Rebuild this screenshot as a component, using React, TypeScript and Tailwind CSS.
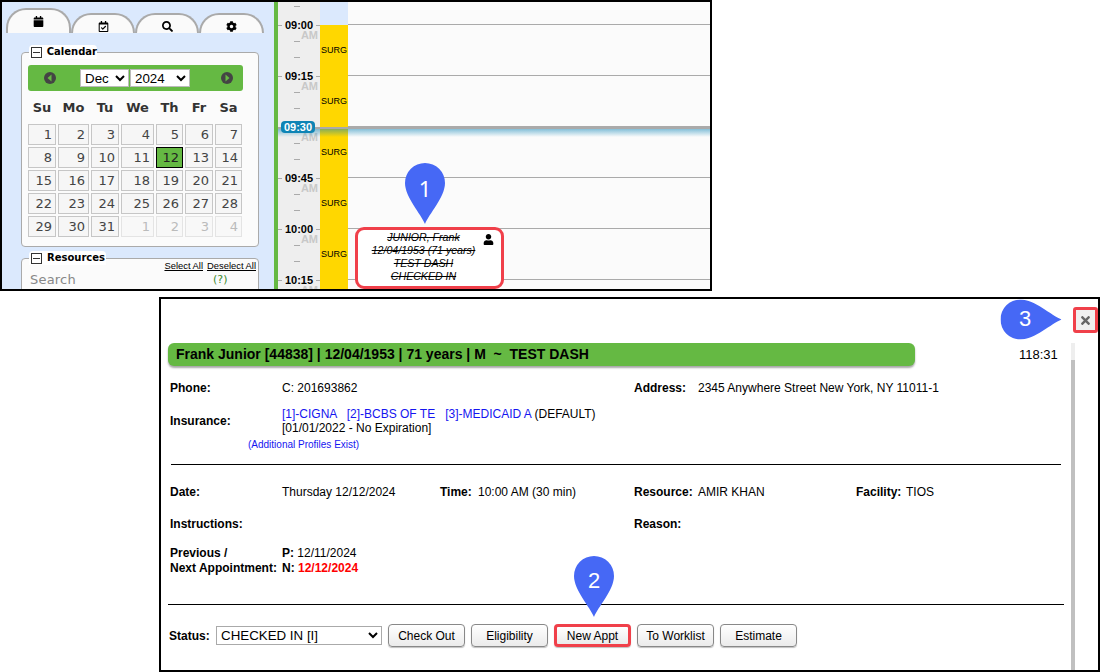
import { FaCalendar, FaRegCalendarCheck, FaSearch, FaCog, FaUser, FaTimes } from 'react-icons/fa'

const weeks = [
  [1, 2, 3, 4, 5, 6, 7],
  [8, 9, 10, 11, 12, 13, 14],
  [15, 16, 17, 18, 19, 20, 21],
  [22, 23, 24, 25, 26, 27, 28],
  [29, 30, 31, 1, 2, 3, 4],
]
const dayNames = ['Su', 'Mo', 'Tu', 'We', 'Th', 'Fr', 'Sa']
const times = ['09:00', '09:15', '09:30', '09:45', '10:00', '10:15']

const detailRow = 'grid grid-cols-[112px_158px_38px_156px_64px_158px_50px_1fr] items-center'

function Pin({ n, className, side }: { n: number; className: string; side?: boolean }) {
  return (
    <div className={`absolute z-20 flex ${side ? 'w-[62px] h-[40px]' : 'w-[40px] h-[61px]'} ${className}`}>
      <svg viewBox="0 0 40 61" className={side ? 'absolute left-[11px] top-[-10px] w-[40px] h-[61px] -rotate-90' : 'absolute inset-0 w-[40px] h-[61px]'}>
        <path d="M20 61 C16 51 0 34 0 20 A20 20 0 0 1 40 20 C40 34 24 51 20 61 Z" fill="#4668f5" />
      </svg>
      <span className={`relative ${side ? 'w-[50px] h-[40px]' : 'w-full h-[50px]'} flex items-center justify-center text-white text-[22px] leading-none`}>{n}</span>
    </div>
  )
}

function Legend({ title, width }: { title: string; width: string }) {
  return (
    <div className={`absolute left-[7px] top-[-8px] h-[14px] ${width} bg-white rounded-t-sm flex items-center gap-[5px] pl-[2px]`}>
      <span className="w-[11px] h-[11px] border border-[#333] bg-white flex items-center justify-center">
        <span className="w-[7px] h-px bg-[#333]" />
      </span>
      <span className="text-[10px] font-bold text-black font-['DejaVu_Sans',sans-serif] leading-none">{title}</span>
    </div>
  )
}

function MonthArrow({ dir }: { dir: 'l' | 'r' }) {
  return (
    <svg viewBox="0 0 12 12" className="w-[12px] h-[12px]">
      <circle cx="6" cy="6" r="6" fill="#444" />
      <polygon points={dir === 'l' ? '7.5,2.5 7.5,9.5 3.5,6' : '4.5,2.5 4.5,9.5 8.5,6'} fill="#65b943" />
    </svg>
  )
}

function Sidebar() {
  return (
    <div className="w-[272px] h-full bg-[#dbe9fd] shrink-0 overflow-hidden font-['DejaVu_Sans',sans-serif]">
      <div className="flex items-end h-[31px] pl-[4px]">
        <div className="w-[65px] h-[25px] bg-[#fafafa] border-2 border-b-0 border-[#aaa] rounded-t-[20px] flex justify-center pt-[6px]">
          <FaCalendar className="text-[11px] text-black" />
        </div>
        <div className="w-[64px] h-[20px] bg-[#fafafa] border-2 border-b-0 border-[#aaa] rounded-t-[20px] flex justify-center pt-[6px]">
          <FaRegCalendarCheck className="text-[11px] text-black" />
        </div>
        <div className="w-[64px] h-[20px] bg-[#fafafa] border-2 border-b-0 border-[#aaa] rounded-t-[20px] flex justify-center pt-[6px]">
          <FaSearch className="text-[11px] text-black" />
        </div>
        <div className="w-[65px] h-[20px] bg-[#fafafa] border-2 border-b-0 border-[#aaa] rounded-t-[20px] flex justify-center pt-[6px]">
          <FaCog className="text-[11px] text-black" />
        </div>
      </div>

      <div className="relative ml-[19px] mt-[19px] w-[238px] h-[195px] bg-[#fbfbfb] border border-[#aaa] rounded-[4px] px-[6px] pt-[12px]">
        <Legend title="Calendar" width="w-[68px]" />
        <div className="h-[26px] w-[215px] bg-[#65b943] rounded-[3px] flex items-center pl-[16px] pr-[10px]">
          <MonthArrow dir="l" />
          <div className="flex gap-px ml-[24px] font-['Liberation_Sans',sans-serif]">
            <select defaultValue="Dec" className="w-[49px] h-[18px] bg-white border border-[#bbb] text-[13.33px] text-black appearance-auto">
              <option>Dec</option>
            </select>
            <select defaultValue="2024" className="w-[60px] h-[18px] bg-white border border-[#bbb] text-[13.33px] text-black appearance-auto">
              <option>2024</option>
            </select>
          </div>
          <div className="ml-auto flex">
            <MonthArrow dir="r" />
          </div>
        </div>
        <div className="grid grid-cols-[28px_31px_28px_33px_27px_28px_27px] gap-x-[2px] gap-y-[2px]">
          {dayNames.map((d) => (
            <div key={d} className="h-[31px] pt-[2px] flex items-center justify-center text-[13px] font-bold text-[#333]">
              {d}
            </div>
          ))}
          {weeks.map((week, w) =>
            week.map((d, i) => {
              const faded = w === 4 && i > 2
              const today = d === 12
              return (
                <div
                  key={`${w}-${i}`}
                  className={`h-[21px] border flex items-center justify-end pr-[3px] text-[13px] ${
                    today
                      ? 'bg-[#65b943] border-black text-[#222]'
                      : faded
                        ? 'bg-[#f8f8f8] border-[#e4e4e4] text-[#bbb]'
                        : 'bg-[#f6f6f6] border-[#c6c6c6] text-[#444]'
                  }`}
                >
                  {d}
                </div>
              )
            })
          )}
        </div>
      </div>

      <div className="relative ml-[19px] mt-[11px] w-[238px] h-[60px] bg-[#fbfbfb] border border-[#aaa] rounded-[4px]">
        <Legend title="Resources" width="w-[77px]" />
        <div className="flex justify-end gap-[4px] pr-[2px] pt-[1px] text-[9.4px] text-black underline font-['Liberation_Sans',sans-serif] h-[12px] leading-[12px]">
          <span>Select All</span>
          <span>Deselect All</span>
        </div>
        <div className="flex items-center pl-[8px] mt-[1px] h-[16px]">
          <span className="w-[183px] text-[13px] text-[#888] tracking-[0.2px]">Search</span>
          <span className="text-[11px] text-[#3d8b2f]">(?)</span>
        </div>
        <div className="ml-[7px] mt-[1px] w-[180px] h-px bg-[#aaa]" />
      </div>
    </div>
  )
}

function Dash() {
  return <div className="w-[6px] h-px bg-[#aaa]" />
}

function TimeColumn() {
  return (
    <div className="w-[42px] shrink-0 bg-[#eeeeee] font-['Liberation_Sans',sans-serif]">
      <div className="h-[17px] pt-[4px] pl-[16px]">
        <Dash />
      </div>
      {times.map((t) => (
        <div key={t} className="h-[51px]">
          <div className="h-[12px] flex items-center justify-between">
            <span className="w-[4px] h-px bg-[#aaa]" />
            <span className="text-[11px] font-bold text-black leading-none">{t === '09:30' ? '' : t}</span>
            <span className="w-[4px] h-px bg-[#aaa]" />
          </div>
          <div className="h-[9px] pr-[2px] text-right text-[11px] font-bold text-[#c8c8c8] leading-[9px]">AM</div>
          <div className="pl-[16px] mt-[1px]">
            <Dash />
          </div>
          <div className="pl-[16px] mt-[15px]">
            <Dash />
          </div>
        </div>
      ))}
    </div>
  )
}

function Schedule() {
  return (
    <div className="relative flex-1 h-full flex overflow-hidden border-l-4 border-[#65b943]">
      <TimeColumn />
      <div className="w-[28px] shrink-0 bg-[#dbe9fd] font-['Liberation_Sans',sans-serif]">
        <div className="h-[23px]" />
        {times.map((t) => (
          <div key={t} className="h-[51px] bg-[#ffd700] flex items-center justify-center text-[9px] text-black">
            {t === '10:15' ? '' : 'SURG'}
          </div>
        ))}
      </div>
      <div className="relative flex-1 bg-[#fbfbfb] font-['Liberation_Sans',sans-serif]">
        <div className="h-[22px]" />
        {times.map((t) => (
          <div key={t} className="h-[51px] border-t border-[#aaa]" />
        ))}
        <div className="absolute left-[7px] top-[225px] w-[149px] h-[62px] bg-white border-[3px] border-[#f0404a] rounded-[9px] z-10 pt-[1px] pr-[12px] text-center text-[10.6px] leading-[13px] italic line-through text-black">
          <div>JUNIOR, Frank</div>
          <div>12/04/1953 (71 years)</div>
          <div>TEST DASH</div>
          <div>CHECKED IN</div>
          <FaUser className="absolute right-[7px] top-[4px] text-[11px] text-black" />
        </div>
      </div>
      {/* current time marker */}
      <div className="absolute left-0 right-0 top-[125px] h-[10px] pointer-events-none">
        <div className="h-[2px] bg-[#aaa]" />
        <div className="h-[8px] bg-linear-to-b from-[#0e84b5]/50 to-transparent" />
        <div className="absolute left-[3px] top-[-6px] w-[34px] h-[12px] bg-[#0e84b5] rounded-[4px] text-white text-[11px] font-bold leading-[12px] text-center font-['Liberation_Sans',sans-serif]">
          09:30
        </div>
      </div>
    </div>
  )
}

function ActionButton({ label, marked }: { label: string; marked?: boolean }) {
  return (
    <button
      className={`w-[77px] h-[23px] rounded-[4px] bg-linear-to-b from-white to-[#ebebeb] text-[12px] text-black shadow-[0_1px_1px_rgba(0,0,0,0.25)] ${
        marked ? 'border-[3px] border-[#f0404a]' : 'border border-[#888]'
      }`}
    >
      {label}
    </button>
  )
}

function Details() {
  return (
    <div className="relative ml-[159px] mt-[6px] w-[941px] h-[375px] border-2 border-black bg-white font-['Liberation_Sans',sans-serif] text-[12px] text-black overflow-hidden">
      <Pin n={3} side className="left-[839px] top-0" />
      <Pin n={2} className="left-[413px] top-[257px]" />

      <div className="flex justify-end h-[44px] pt-[8px]">
        <button className="w-[25px] h-[26px] border-[3px] border-[#f0404a] rounded-[3px] bg-[#f0f0f0] flex items-center justify-center">
          <FaTimes className="text-[13px] text-[#666]" />
        </button>
      </div>

      <div className="flex">
        <div className="w-[904px] pl-[7px]">
          <div className="flex items-center">
            <div className="w-[747px] h-[23px] bg-[#65b943] rounded-[6px] shadow-[0_2px_2px_rgba(0,0,0,0.35)] pl-[8px] flex items-center text-[14px] font-bold whitespace-pre">
              Frank Junior [44838] | 12/04/1953 | 71 years | M  ~  TEST DASH
            </div>
            <span className="ml-[104px] w-[39px] text-[13px]">118:31</span>
          </div>

          <div className="pl-[2px] w-[897px]">
            <div className={`${detailRow} mt-[13px] h-[14px]`}>
              <b>Phone:</b>
              <span className="col-span-3">C: 201693862</span>
              <b>Address:</b>
              <span className="col-span-3">2345 Anywhere Street New York, NY 11011-1</span>
            </div>
            <div className={`${detailRow} mt-[14px]`}>
              <b>Insurance:</b>
              <div className="col-span-6 leading-[14px]">
                <div className="whitespace-pre">
                  <span className="text-[#1515f0]">[1]-CIGNA   [2]-BCBS OF TE   [3]-MEDICAID A</span> (DEFAULT)
                </div>
                <div>[01/01/2022 - No Expiration]</div>
              </div>
            </div>
            <div className="pl-[78px] mt-[4px] text-[10px] leading-[12px] text-[#1515f0]">(Additional Profiles Exist)</div>
            <div className="mt-[13px] ml-[1px] w-[890px] h-px bg-black" />

            <div className={`${detailRow} mt-[18px] h-[14px]`}>
              <b>Date:</b>
              <span>Thursday 12/12/2024</span>
              <b>Time:</b>
              <span>10:00 AM (30 min)</span>
              <b>Resource:</b>
              <span>AMIR KHAN</span>
              <b>Facility:</b>
              <span>TIOS</span>
            </div>
            <div className={`${detailRow} mt-[18px] h-[14px]`}>
              <b className="col-span-4">Instructions:</b>
              <b>Reason:</b>
            </div>
            <div className={`${detailRow} mt-[17px] leading-[15px]`}>
              <b>
                Previous /<br />
                Next Appointment:
              </b>
              <div className="col-span-2">
                <div>
                  <b>P:</b> 12/11/2024
                </div>
                <div>
                  <b>N:</b> <b className="text-[#f00]">12/12/2024</b>
                </div>
              </div>
            </div>
          </div>

          <div className="mt-[28px] w-[896px] h-px bg-black" />

          <div className="mt-[19px] flex items-center pl-[1px]">
            <b className="w-[47px]">Status:</b>
            <select defaultValue="CHECKED IN [I]" className="w-[166px] h-[19px] border border-[#aaa] bg-white text-[13.33px] appearance-auto">
              <option>CHECKED IN [I]</option>
            </select>
            <div className="flex items-center ml-[6px] gap-[6px]">
              <ActionButton label="Check Out" />
              <ActionButton label="Eligibility" />
              <ActionButton label="New Appt" marked />
              <ActionButton label="To Worklist" />
              <ActionButton label="Estimate" />
            </div>
          </div>
        </div>
        <div className="w-[4px] ml-[6px] h-[330px] bg-[#eeeeee]">
          <div className="mt-[17px] h-[320px] bg-[#c0c0c0]" />
        </div>
      </div>
    </div>
  )
}

export default function App() {
  return (
    <div className="w-[1100px] h-[672px] bg-white overflow-hidden">
      <div className="relative w-[712px] h-[291px] border-2 border-black flex">
        <Sidebar />
        <Schedule />
        <Pin n={1} className="left-[403px] top-[161px]" />
      </div>
      <Details />
    </div>
  )
}
